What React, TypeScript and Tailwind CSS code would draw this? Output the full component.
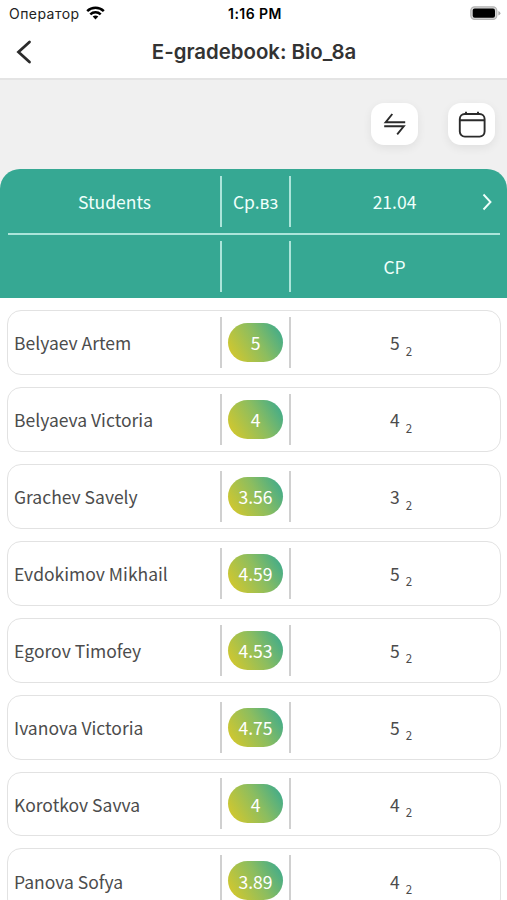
import type { ReactNode } from "react";

const students = [
  { name: "Belyaev Artem", average: "5", mark: "5" },
  { name: "Belyaeva Victoria", average: "4", mark: "4" },
  { name: "Grachev Savely", average: "3.56", mark: "3" },
  { name: "Evdokimov Mikhail", average: "4.59", mark: "5" },
  { name: "Egorov Timofey", average: "4.53", mark: "5" },
  { name: "Ivanova Victoria", average: "4.75", mark: "5" },
  { name: "Korotkov Savva", average: "4", mark: "4" },
  { name: "Panova Sofya", average: "3.89", mark: "4" },
];

function StatusBar() {
  return (
    <div className="flex h-[27px] items-center pl-[9px] pr-[6px] text-black">
      <div className="flex flex-1 items-center gap-[6px]">
        <span className="text-[14px] leading-[27px] tracking-[0.45px] text-[#222]">Оператор</span>
        <svg className="-mt-[2px]" width="19" height="14" viewBox="0 0 19 14" fill="none" stroke="#000" strokeWidth="2.5">
          <path d="M1.2 5.1C5.8 .6 13.2 .6 17.8 5.1" />
          <path d="M4.3 8.3c2.9-2.8 7.5-2.8 10.4 0" />
          <path d="M6.7 10.6c1.6-1.5 4-1.5 5.6 0L9.5 13.5z" fill="#000" stroke="none" />
        </svg>
      </div>
      <span className="text-[14px] font-semibold leading-[27px] tracking-[0.45px]">1:16 PM</span>
      <div className="flex flex-1 justify-end">
        <svg className="-mt-[1px]" width="31" height="14" viewBox="0 0 31 14">
          <rect x=".8" y=".8" width="26" height="12.6" rx="3.8" fill="#d8d8d8" stroke="#b4b4b4" strokeWidth="1.2" />
          <rect x="2.7" y="2.5" width="22.3" height="9.2" rx="2" fill="#000" />
          <path d="M28.4 5v4.4q2-.8 2-2.2t-2-2.2z" fill="#aaa" />
        </svg>
      </div>
    </div>
  );
}

function Divider({ color }: { color: string }) {
  return <div className={`h-[51px] w-[2px] shrink-0 ${color}`} />;
}

function ToolButton({ children }: { children: ReactNode }) {
  return (
    <button className="flex h-[42px] w-[47px] items-center justify-center rounded-[13px] bg-white shadow-[0_3px_10px_rgba(0,0,0,0.07)]">
      {children}
    </button>
  );
}

export default function App() {
  return (
    <div className="flex h-[900px] w-[507px] flex-col overflow-hidden bg-white font-['Inter',sans-serif]">
      <StatusBar />
      <header className="flex h-[53px] shrink-0 items-center border-b-2 border-[#e4e4e4] px-4 pb-[2px]">
        <svg width="16" height="24" viewBox="0 0 16 24" fill="none" stroke="#2b2b2b" strokeWidth="2.8" strokeLinecap="round">
          <path d="M13.5 2 2.5 12l11 10" />
        </svg>
        <h1 className="flex-1 pr-[15px] text-center text-[20.4px] font-semibold leading-[49px] text-[#333]">
          E-gradebook: Bio_8a
        </h1>
      </header>

      <div className="shrink-0 bg-[#f0f0f0]">
        <div className="flex h-[89px] items-center justify-end gap-[30px] pr-3 pb-[1px]">
          <ToolButton>
            <svg width="24" height="24" viewBox="0 0 24 24" fill="none" stroke="#2b2b2b" strokeWidth="1.9">
              <path d="M9.3 2 2.6 10.3H22.2" />
              <path d="M1.2 14.3H20.8L14.2 22.3" />
            </svg>
          </ToolButton>
          <ToolButton>
            <svg width="28" height="28" viewBox="0 0 28 28" fill="none" stroke="#2b2b2b" strokeWidth="1.9">
              <rect x="1.8" y="4" width="24.8" height="22.6" rx="5" />
              <path d="M1.8 10.2h24.800M8 1.8V4M20 1.8V4" />
            </svg>
          </ToolButton>
        </div>

        <div className="flex h-[129px] flex-col rounded-t-[20px] bg-[#36a893] pl-2 pr-[7px] font-['Noto_Sans_CJK_SC',sans-serif] text-[17.5px] text-[#effffb]">
          <div className="flex h-[64px] items-center">
            <span className="w-[212px] shrink-0 pl-[1px] pt-[2px] text-center">Students</span>
            <Divider color="bg-[#ace5da]" />
            <span className="w-[67px] shrink-0 pt-[2px] text-center">Ср.вз</span>
            <Divider color="bg-[#ace5da]" />
            <span className="w-[208px] shrink-0 pr-[1px] pt-[2px] text-center">21.04</span>
            <svg className="-ml-[18px] mt-[1px] shrink-0" width="12" height="18" viewBox="0 0 12 18" fill="none" stroke="#effffb" strokeWidth="1.9">
              <path d="m2.500 1.5 7 7.5-7 7.5" />
            </svg>
          </div>
          <div className="h-[2px] shrink-0 bg-[#ace5da]" />
          <div className="flex h-[63px] items-center">
            <span className="w-[212px] shrink-0" />
            <Divider color="bg-[#ace5da]" />
            <span className="w-[67px] shrink-0" />
            <Divider color="bg-[#ace5da]" />
            <span className="w-[208px] shrink-0 pr-[1px] pt-[1px] text-center">СР</span>
          </div>
        </div>
      </div>

      <main className="flex flex-col gap-[12px] px-[7px] pt-[12px] font-['Noto_Sans_CJK_SC',sans-serif] text-[17.5px] text-[#4c4c4c]">
        {students.map((student) => (
          <div
            key={student.name}
            className="flex h-[64.93px] w-[494px] shrink-0 items-center rounded-[14px] border border-[#e2e2e2]"
          >
            <span className="w-[212px] shrink-0 whitespace-nowrap pl-[6px] pt-[2px]">{student.name}</span>
            <Divider color="bg-[#d0d0d0]" />
            <div className="flex w-[67px] shrink-0 justify-center">
              <span className="flex h-[39px] w-[55px] items-center justify-center rounded-[19.5px] bg-linear-[60deg,#d6c82b_5%,#8bbd60_55%,#37a990_98%] pt-[2px] text-white">
                {student.average}
              </span>
            </div>
            <Divider color="bg-[#d0d0d0]" />
            <div className="flex w-[208px] shrink-0 items-center pl-[99px] pt-[2px]">
              <span>{student.mark}</span>
              <span className="ml-[6px] mt-[16px] text-[11.5px] leading-none">2</span>
            </div>
          </div>
        ))}
      </main>
    </div>
  );
}
